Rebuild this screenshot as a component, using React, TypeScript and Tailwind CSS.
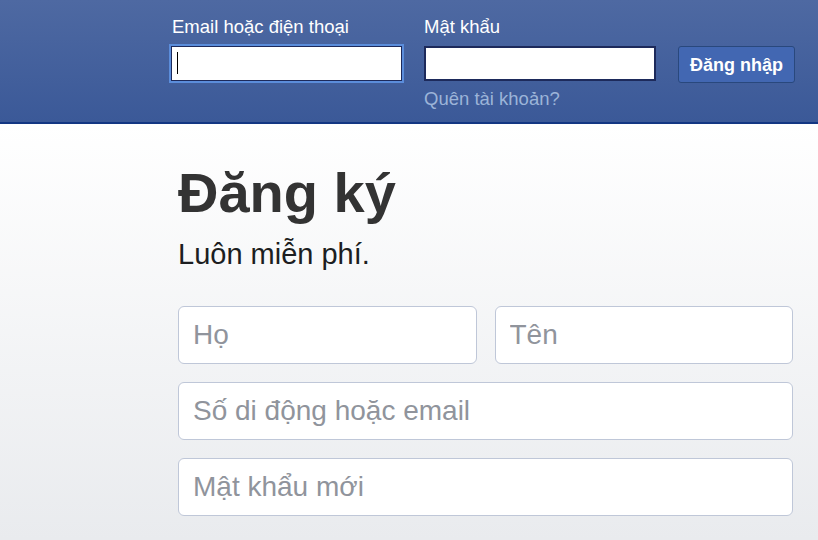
export default function App() {
  const font = { fontFamily: '"Liberation Sans", Arial, sans-serif' };

  return (
    <div className="w-[818px] h-[540px] overflow-hidden flex flex-col" style={font}>
      {/* Header */}
      <header className="h-[124px] shrink-0 bg-gradient-to-b from-[#4e69a2] to-[#3b5998] border-b-2 border-[#133783] flex items-start pl-[171px] pt-[16px]">
        <div className="w-[232px] flex flex-col">
          <label className="text-[18.5px] leading-[22px] text-white pl-px mb-[8px]">
            Email hoặc điện thoại
          </label>
          <div className="relative">
            <input
              className="w-[231px] h-[35px] bg-white border border-[#1d2a5b] outline-none shadow-[0_0_0_2px_#5b8ddb] px-[6px] text-[16px]"
              type="text"
            />
            <span className="absolute left-[6px] top-[6px] w-px h-[22px] bg-black" />
          </div>
        </div>
        <div className="w-[232px] ml-[21px] flex flex-col">
          <label className="text-[18.5px] leading-[22px] text-white mb-[8px]">
            Mật khẩu
          </label>
          <input
            className="w-[232px] h-[35px] bg-white border-2 border-[#1d2a5b] outline-none px-[6px] text-[16px]"
            type="password"
          />
          <a className="text-[18.5px] leading-[20px] text-[#9cb4d8] mt-[8px]">
            Quên tài khoản?
          </a>
        </div>
        <button className="ml-[22px] mt-[30px] w-[117px] h-[37px] bg-[#4267b2] border border-[#29487d] rounded-[3px] text-white font-bold text-[18px] leading-none">
          Đăng nhập
        </button>
      </header>

      {/* Body */}
      <main className="flex-1 bg-gradient-to-b from-white to-[#e9ebee] pl-[178px] pt-[41px]">
        <h1 className="text-[56px] leading-[56px] font-bold text-[#333333]">Đăng ký</h1>
        <p className="text-[29px] leading-[29px] text-[#1c1e21] mt-[19px]">Luôn miễn phí.</p>

        <div className="w-[615px] mt-[37px] flex flex-col gap-[18px]">
          <div className="flex gap-[18px]">
            <input
              className="flex-1 min-w-0 h-[58px] bg-white border border-[#bfc7d8] rounded-[6px] px-[14px] text-[28px] text-[#1c1e21] placeholder:text-[#90949c] outline-none"
              placeholder="Họ"
            />
            <input
              className="flex-1 min-w-0 h-[58px] bg-white border border-[#bfc7d8] rounded-[6px] px-[14px] text-[28px] text-[#1c1e21] placeholder:text-[#90949c] outline-none"
              placeholder="Tên"
            />
          </div>
          <input
            className="w-full h-[58px] bg-white border border-[#bfc7d8] rounded-[6px] px-[14px] text-[28px] text-[#1c1e21] placeholder:text-[#90949c] outline-none"
            placeholder="Số di động hoặc email"
          />
          <input
            className="w-full h-[58px] bg-white border border-[#bfc7d8] rounded-[6px] px-[14px] text-[28px] text-[#1c1e21] placeholder:text-[#90949c] outline-none"
            placeholder="Mật khẩu mới"
          />
        </div>
      </main>
    </div>
  );
}
